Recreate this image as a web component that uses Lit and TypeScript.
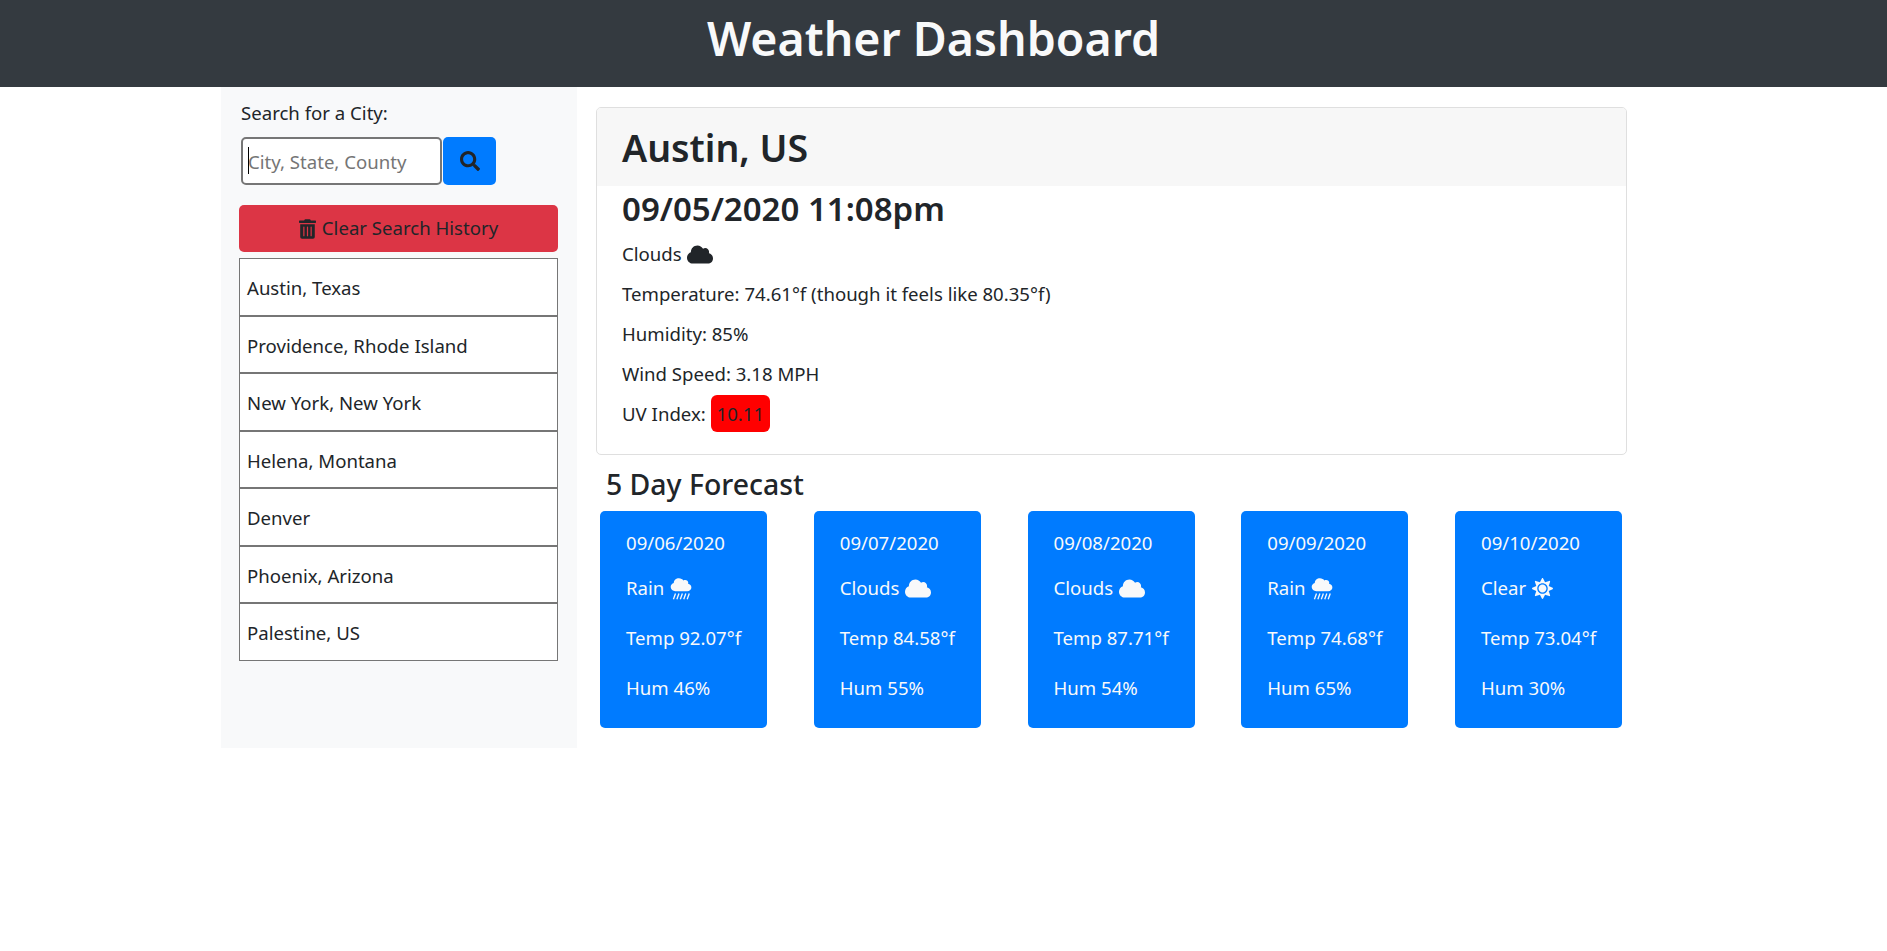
import { LitElement, html, css, svg } from 'lit';
import { customElement } from 'lit/decorators.js';

const CLOUD = 'M537.6 226.6c4.1-10.7 6.4-22.4 6.4-34.6 0-53-43-96-96-96-19.7 0-38.1 6-53.3 16.2C367 64.2 315.3 32 256 32c-88.4 0-160 71.6-160 160 0 2.7.1 5.4.2 8.1C40.2 219.8 0 273.2 0 336c0 79.5 64.5 144 144 144h368c70.7 0 128-57.3 128-128 0-61.9-44-113.6-102.4-125.4z';
const SUN = 'M256 160c-52.9 0-96 43.1-96 96s43.1 96 96 96 96-43.1 96-96-43.1-96-96-96zm246.4 80.5l-94.7-47.3 33.5-100.4c4.5-13.6-8.4-26.5-21.9-21.9l-100.4 33.5-47.4-94.8c-6.4-12.8-24.6-12.8-31 0l-47.3 94.7L92.7 70.8c-13.6-4.5-26.5 8.4-21.9 21.9l33.5 100.4-94.7 47.4c-12.8 6.4-12.8 24.6 0 31l94.7 47.3-33.5 100.5c-4.5 13.6 8.4 26.5 21.9 21.9l100.4-33.5 47.3 94.7c6.4 12.8 24.6 12.8 31 0l47.3-94.7 100.4 33.5c13.6 4.5 26.5-8.4 21.9-21.9l-33.5-100.4 94.7-47.3c13-6.5 13-24.7.2-31.1zm-155.9 106c-49.9 49.9-131.1 49.9-181 0-49.9-49.9-49.9-131.1 0-181 49.9-49.9 131.1-49.9 181 0 49.9 49.9 49.9 131.1 0 181z';
const SEARCH = 'M505 442.7L405.3 343c-4.5-4.5-10.6-7-17-7H372c27.6-35.3 44-79.7 44-128C416 93.1 322.9 0 208 0S0 93.1 0 208s93.1 208 208 208c48.3 0 92.7-16.4 128-44v16.3c0 6.4 2.5 12.5 7 17l99.7 99.7c9.4 9.4 24.6 9.4 33.9 0l28.3-28.3c9.4-9.4 9.4-24.6.1-34zM208 336c-70.7 0-128-57.2-128-128 0-70.7 57.2-128 128-128 70.7 0 128 57.2 128 128 0 70.7-57.2 128-128 128z';
const TRASH = 'M32 464a48 48 0 0 0 48 48h288a48 48 0 0 0 48-48V128H32zm272-256a16 16 0 0 1 32 0v224a16 16 0 0 1-32 0zm-96 0a16 16 0 0 1 32 0v224a16 16 0 0 1-32 0zm-96 0a16 16 0 0 1 32 0v224a16 16 0 0 1-32 0zM432 32H312l-9.4-18.7A24 24 0 0 0 281.1 0H166.8a23.72 23.72 0 0 0-21.4 13.3L136 32H16A16 16 0 0 0 0 48v32a16 16 0 0 0 16 16h416a16 16 0 0 0 16-16V48a16 16 0 0 0-16-16z';

const cloudIcon = html`<svg class="ico" width="26" height="21" viewBox="0 0 640 512" fill="currentColor"><path d=${CLOUD} /></svg>`;
const sunIcon = html`<svg class="ico" width="21" height="21" viewBox="0 0 512 512" fill="currentColor"><path d=${SUN} /></svg>`;
const rainIcon = html`<svg class="ico" width="22" height="22" viewBox="0 0 640 640" fill="currentColor">
  <g transform="translate(20,-20) scale(0.94,0.84)"><path d=${CLOUD} /></g>
  ${[120, 220, 320, 420, 520].map(
    (x) => svg`<line x1=${x + 40} y1="450" x2=${x - 20} y2="620" stroke="currentColor" stroke-width="38" />`
  )}
</svg>`;

const CITIES = [
  'Austin, Texas',
  'Providence, Rhode Island',
  'New York, New York',
  'Helena, Montana',
  'Denver',
  'Phoenix, Arizona',
  'Palestine, US',
];

const FORECAST = [
  { date: '09/06/2020', kind: 'Rain', icon: rainIcon, temp: '92.07', hum: '46' },
  { date: '09/07/2020', kind: 'Clouds', icon: cloudIcon, temp: '84.58', hum: '55' },
  { date: '09/08/2020', kind: 'Clouds', icon: cloudIcon, temp: '87.71', hum: '54' },
  { date: '09/09/2020', kind: 'Rain', icon: rainIcon, temp: '74.68', hum: '65' },
  { date: '09/10/2020', kind: 'Clear', icon: sunIcon, temp: '73.04', hum: '30' },
];

@customElement('app-root')
export class AppRoot extends LitElement {
  static styles = css`
    :host {
      display: block;
      min-height: 951px;
      background: #fff;
      color: #212529;
      font-family: 'Noto Sans', 'Open Sans', sans-serif;
      font-size: 18.6px;
      line-height: 28.8px;
    }

    .topbar {
      box-sizing: border-box;
      height: 87px;
      padding-right: 20px;
      background: #343a40;
      color: #f8f9fa;
      text-align: center;
    }

    .topbar h1 {
      margin: 0;
      font-size: 46.5px;
      font-weight: 600;
      line-height: 77px;
    }

    .layout {
      display: flex;
      align-items: flex-start;
      padding-left: 221px;
    }

    .sidebar {
      box-sizing: border-box;
      width: 356px;
      height: 661px;
      padding: 12px 19px 0 18px;
      background: #f8f9fa;
    }

    .label {
      padding-left: 2px;
      height: 38px;
    }

    .search {
      display: flex;
      gap: 1px;
      padding-left: 2px;
      height: 48px;
    }

    .field {
      position: relative;
      width: 201px;
    }

    .field input {
      box-sizing: border-box;
      width: 100%;
      height: 48px;
      border: 2px solid #767676;
      border-radius: 5px;
      padding: 0 0 0 5px;
      background: #fff;
      font: inherit;
      outline: none;
    }

    .field input::placeholder {
      color: #757575;
      opacity: 1;
    }

    .caret {
      position: absolute;
      left: 7px;
      top: 10px;
      width: 1px;
      height: 27px;
      background: #000;
    }

    .search-btn {
      width: 53px;
      height: 48px;
      border: none;
      border-radius: 5px;
      padding: 0;
      background: #007bff;
      color: #212529;
      display: flex;
      align-items: center;
      justify-content: center;
    }

    .clear-btn {
      box-sizing: border-box;
      width: 319px;
      height: 47px;
      margin-top: 20px;
      border: none;
      border-radius: 5px;
      padding: 0;
      background: #dc3545;
      color: #212529;
      font: inherit;
      display: flex;
      align-items: center;
      justify-content: center;
      gap: 6px;
    }

    .history {
      width: 319px;
      margin-top: 6px;
    }

    .history div {
      box-sizing: border-box;
      height: 57.5px;
      padding: 15px 0 0 7px;
      border: 1px solid #767676;
      background: #fff;
    }

    .main {
      width: 1031px;
      margin-left: 19px;
      padding-top: 20px;
    }

    .card {
      box-sizing: border-box;
      height: 348px;
      border: 1px solid #dfdfdf;
      border-radius: 5px;
      overflow: hidden;
    }

    .card-head {
      height: 78px;
      padding-left: 25px;
      background: #f7f7f7;
    }

    h2 {
      margin: 0;
      font-size: 37.5px;
      font-weight: 600;
      line-height: 80px;
    }

    .card-body {
      padding-left: 25px;
    }

    .card-body h3 {
      margin: 0 0 9px;
      font-size: 33px;
      font-weight: 600;
      line-height: 45px;
    }

    .card-body p {
      display: flex;
      align-items: center;
      height: 29px;
      margin: 0 0 11px;
      white-space: pre;
    }

    .uv {
      box-sizing: border-box;
      height: 37px;
      margin-bottom: 2px;
      padding: 5px 6px 0;
      border-radius: 6px;
      background: #f00;
    }

    .forecast-title {
      margin: 12px 0 9px 10px;
      font-size: 28.4px;
      font-weight: 500;
      line-height: 35px;
    }

    .days {
      display: flex;
      justify-content: space-between;
      width: 1022px;
      margin-left: 4px;
    }

    .day {
      box-sizing: border-box;
      width: 167px;
      height: 217px;
      padding: 18px 0 0 26px;
      border-radius: 5px;
      background: #007bff;
      color: #f8f9fa;
    }

    .day div {
      display: flex;
      align-items: center;
      height: 29px;
      white-space: pre;
    }

    .day .d {
      margin-bottom: 16px;
    }

    .day .w {
      margin-bottom: 21px;
    }

    .day .t {
      margin-bottom: 21px;
    }

    .ico {
      display: block;
      flex: none;
      margin-left: 1px;
    }
  `;

  render() {
    return html`
      <header class="topbar"><h1>Weather Dashboard</h1></header>
      <div class="layout">
        <aside class="sidebar">
          <div class="label">Search for a City:</div>
          <div class="search">
            <div class="field">
              <input placeholder="City, State, County" />
              <span class="caret"></span>
            </div>
            <button class="search-btn">
              <svg width="20" height="20" viewBox="0 0 512 512" fill="currentColor"><path d=${SEARCH} /></svg>
            </button>
          </div>
          <button class="clear-btn">
            <svg width="17" height="20" viewBox="0 0 448 512" fill="currentColor"><path d=${TRASH} /></svg>
            Clear Search History
          </button>
          <div class="history">
            ${CITIES.map((c) => html`<div>${c}</div>`)}
          </div>
        </aside>
        <main class="main">
          <section class="card">
            <div class="card-head"><h2>Austin, US</h2></div>
            <div class="card-body">
              <h3>09/05/2020 11:08pm</h3>
              <p>Clouds ${cloudIcon}</p>
              <p>Temperature: 74.61°f (though it feels like 80.35°f)</p>
              <p>Humidity: 85%</p>
              <p>Wind Speed: 3.18 MPH</p>
              <p>UV Index: <span class="uv">10.11</span></p>
            </div>
          </section>
          <div class="forecast-title">5 Day Forecast</div>
          <div class="days">
            ${FORECAST.map(
              (f) => html`
                <div class="day">
                  <div class="d">${f.date}</div>
                  <div class="w">${f.kind} ${f.icon}</div>
                  <div class="t">Temp ${f.temp}°f</div>
                  <div>Hum ${f.hum}%</div>
                </div>
              `
            )}
          </div>
        </main>
      </div>
    `;
  }
}
